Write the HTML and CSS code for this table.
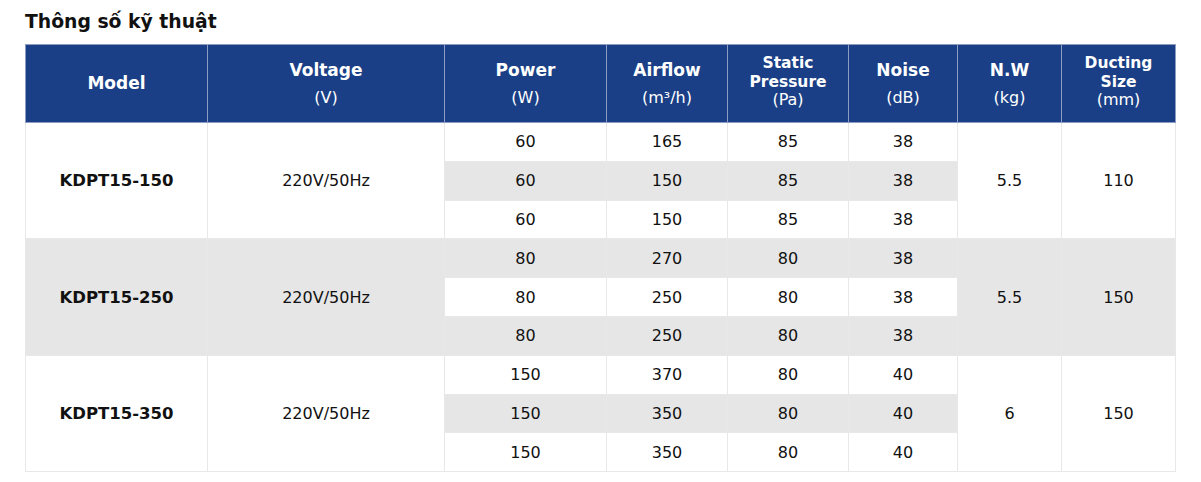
FILE: index.html
```html
<!DOCTYPE html>
<html lang="vi">
<head>
<meta charset="utf-8">
<link rel="stylesheet" href="styles.css">
</head>
<body>
<div class="page">
  <h2 class="title">Thông số kỹ thuật</h2>
  <table class="spec">
    <colgroup>
      <col class="c-model"><col class="c-volt"><col class="c-power"><col class="c-air"><col class="c-static"><col class="c-noise"><col class="c-nw"><col class="c-duct">
    </colgroup>
    <thead>
      <tr>
        <th><span class="h">Model</span></th>
        <th><span class="h">Voltage</span><span class="u">(V)</span></th>
        <th><span class="h">Power</span><span class="u">(W)</span></th>
        <th><span class="h">Airflow</span><span class="u">(m³/h)</span></th>
        <th class="tight"><span class="h">Static</span><span class="h">Pressure</span><span class="u">(Pa)</span></th>
        <th><span class="h">Noise</span><span class="u">(dB)</span></th>
        <th><span class="h">N.W</span><span class="u">(kg)</span></th>
        <th class="tight"><span class="h">Ducting</span><span class="h">Size</span><span class="u">(mm)</span></th>
      </tr>
    </thead>
    <tbody>
      <tr><td rowspan="3" class="model">KDPT15-150</td><td rowspan="3">220V/50Hz</td><td>60</td><td>165</td><td>85</td><td>38</td><td rowspan="3">5.5</td><td rowspan="3">110</td></tr>
      <tr><td>60</td><td>150</td><td>85</td><td>38</td></tr>
      <tr><td>60</td><td>150</td><td>85</td><td>38</td></tr>
      <tr><td rowspan="3" class="model">KDPT15-250</td><td rowspan="3">220V/50Hz</td><td>80</td><td>270</td><td>80</td><td>38</td><td rowspan="3">5.5</td><td rowspan="3">150</td></tr>
      <tr><td>80</td><td>250</td><td>80</td><td>38</td></tr>
      <tr><td>80</td><td>250</td><td>80</td><td>38</td></tr>
      <tr><td rowspan="3" class="model">KDPT15-350</td><td rowspan="3">220V/50Hz</td><td>150</td><td>370</td><td>80</td><td>40</td><td rowspan="3">6</td><td rowspan="3">150</td></tr>
      <tr><td>150</td><td>350</td><td>80</td><td>40</td></tr>
      <tr><td>150</td><td>350</td><td>80</td><td>40</td></tr>
    </tbody>
  </table>
</div>
</body>
</html>
```
FILE: styles.css
```css
* { box-sizing: border-box; }
html, body { margin: 0; padding: 0; background: #fff; }
body { font-family: "DejaVu Sans", "Noto Sans", sans-serif; color: #111; }
.page { padding: 10px 25px 0 25px; }
.title {
  margin: 0 0 10px 0;
  font-size: 18.8px;
  line-height: 24px;
  font-weight: 700;
  color: #111;
}
.spec {
  width: 1150px;
  table-layout: fixed;
  border-collapse: collapse;
}
.c-model { width: 182px; }
.c-volt { width: 237px; }
.c-power { width: 162px; }
.c-air { width: 121px; }
.c-static { width: 121px; }
.c-noise { width: 109px; }
.c-nw { width: 104px; }
.c-duct { width: 114px; }
.spec th {
  background: #1a3f86;
  color: #fff;
  height: 78px;
  padding: 0 4px;
  border: 1px solid #8d9cc0;
  text-align: center;
  vertical-align: middle;
}
.spec th .h {
  display: block;
  font-size: 17px;
  font-weight: 700;
  line-height: 27px;
}
.spec th .u {
  display: block;
  font-size: 16px;
  font-weight: 400;
  line-height: 27px;
}
.spec th.tight .h { font-size: 15.5px; line-height: 18.5px; }
.spec th.tight .u { line-height: 18.5px; }
.spec th.tight { padding-bottom: 3px; }
.spec td {
  height: 38.8px;
  padding: 0 4px;
  border: 1px solid #e8e8e8;
  text-align: center;
  vertical-align: middle;
  font-size: 16px;
  font-weight: 400;
  background: #fff;
}
.spec tbody tr:nth-child(even) td { background: #e6e6e6; }
.spec td.model { font-weight: 700; font-size: 16.5px; }
```
